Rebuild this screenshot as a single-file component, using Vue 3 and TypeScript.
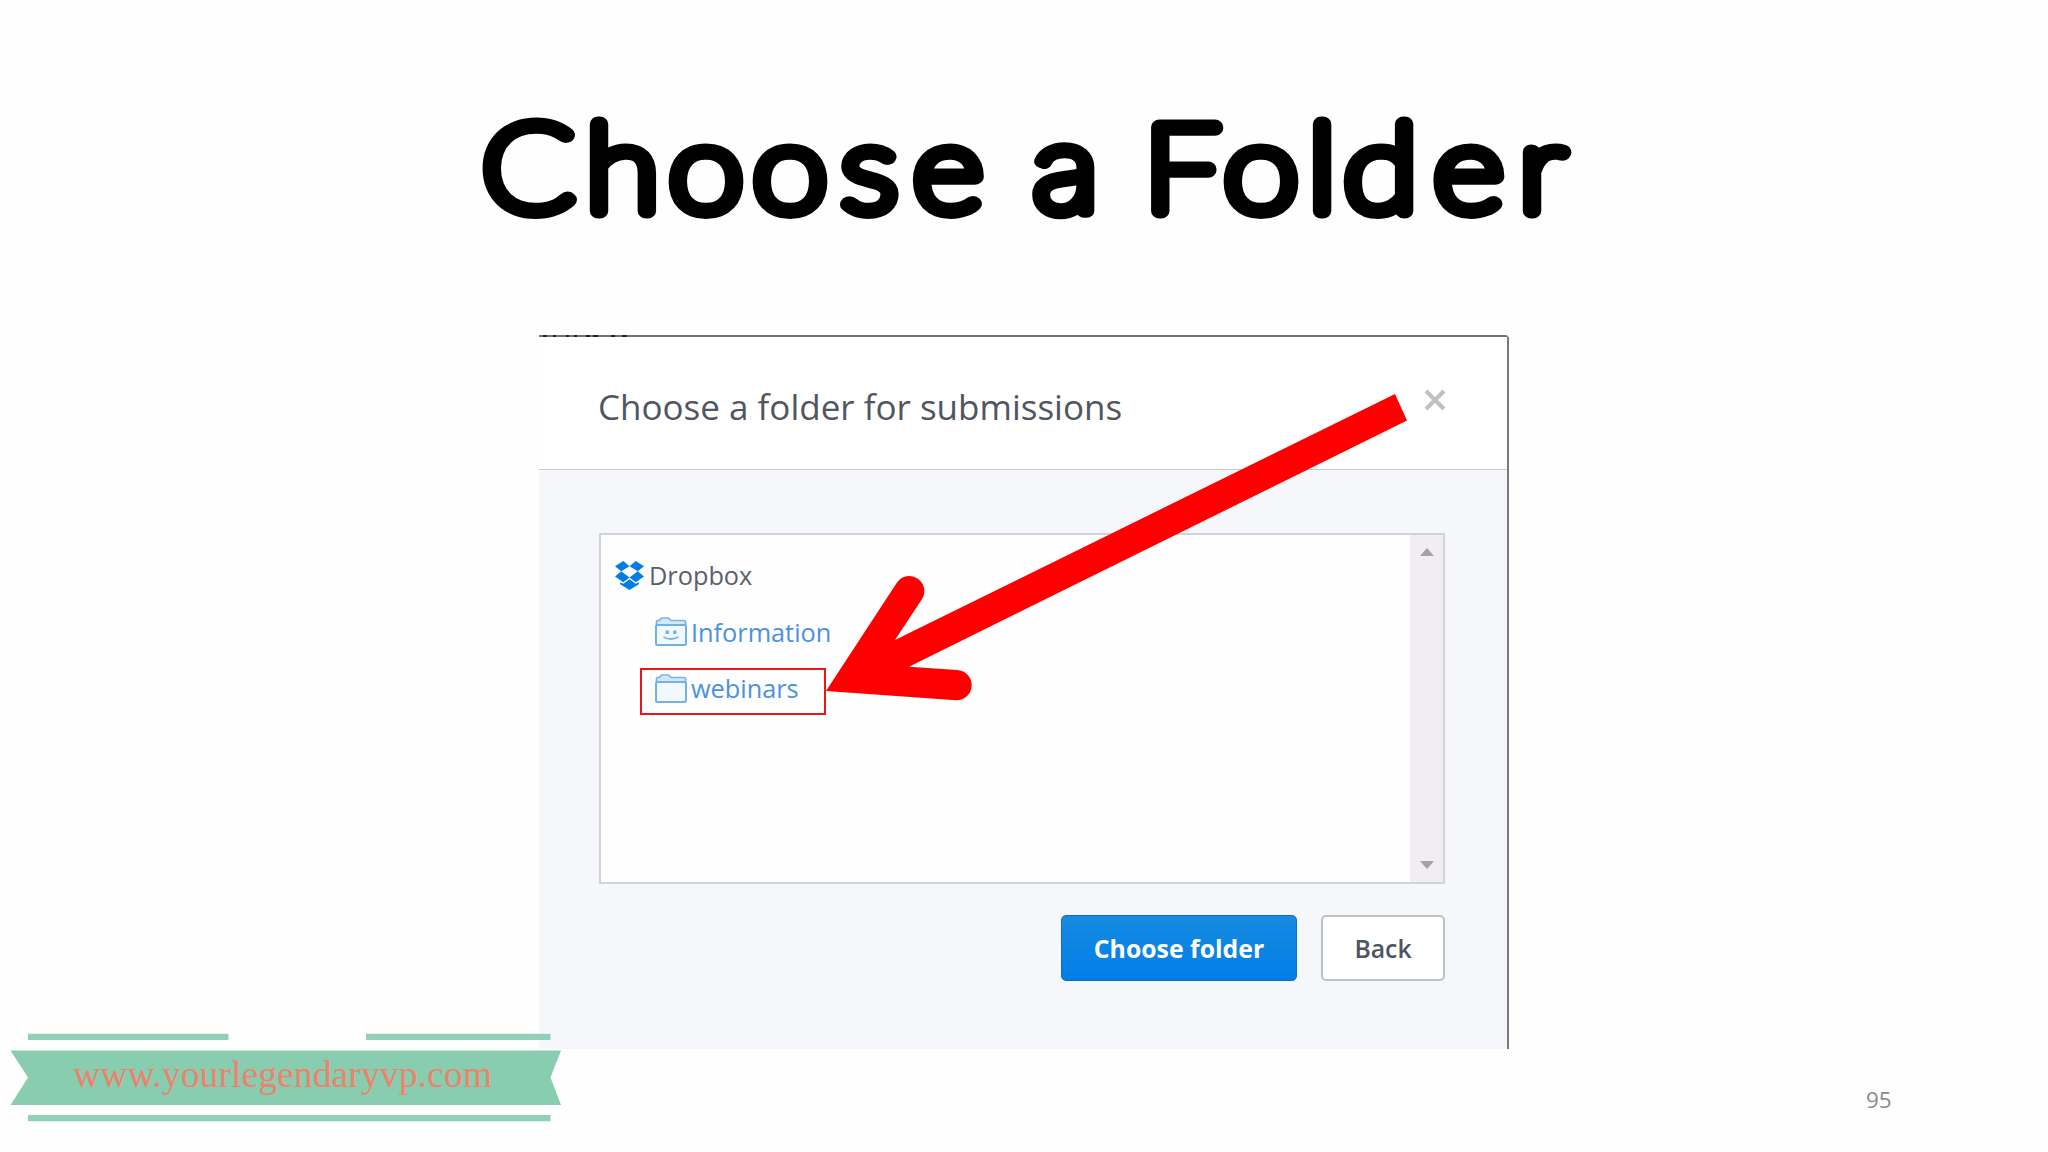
<template>
    <main class="slide">
        <svg class="headline" viewBox="0 0 2048 335" role="heading" aria-level="1">
            <text :x="headlineX" y="211.500" transform="scale(1.12 1)">Choose <tspan class="round-a">a</tspan> Folder</text>
        </svg>

        <section class="dialog">
            <svg class="clipped-text" viewBox="0 0 92 2">
                <path d="M4 1h4M14 1h3M27 1h3M35 1h3M47 1h4M54 1h5M72 1h4M83 1h5" />
            </svg>
            <header class="dialog-header">
                <h2>Choose a folder for submissions</h2>
                <button class="dialog-close" aria-label="Close">
                    <svg viewBox="0 0 22 22"><path d="M2 2l18 18M20 2L2 20" /></svg>
                </button>
            </header>
            <div class="dialog-body">
                <div class="tree">
                    <div class="tree-content">
                        <div class="tree-root">
                            <svg class="dropbox-icon" viewBox="0 0 28 28">
                                <path d="M8 0l6 5-8 5-6-5zM20 0l8 5-6 5-8-5zM0 15l6-5 8 6-6 4.500zM28 15l-6-5-8 6 6 4.500zM14 17.500l6 4.500 3-1.500v2L14 28l-9-5.500v-2L8 22z" />
                            </svg>
                            <span>Dropbox</span>
                        </div>
                        <div v-for="folder in folders" :key="folder.name" class="tree-row">
                            <svg class="folder-icon" viewBox="0 0 32 29">
                                <path class="folder-tab" d="M1.500 8V4.500q0-1 1-1h2L6.500 1h7l2.500 2.500h13.500q1 0 1 1V8z" />
                                <rect class="folder-front" x="1" y="8" width="30" height="20" rx="1.500" />
                                <path v-if="folder.shared" class="face" d="M10.500 13.500h3.500v3.500h-3.500zM18 13.500h3.500v3.500h-3.500z" />
                                <path v-if="folder.shared" class="smile" d="M8.500 20q7.500 4 15 0" />
                            </svg>
                            <span>{{ folder.name }}</span>
                        </div>
                    </div>
                    <div class="scrollbar">
                        <svg viewBox="0 0 14 8"><path d="M7 0l7 8H0z" /></svg>
                        <svg viewBox="0 0 14 8"><path d="M0 0h14L7 8z" /></svg>
                    </div>
                </div>
                <div class="actions">
                    <button class="btn btn-primary">Choose folder</button>
                    <button class="btn btn-back">Back</button>
                </div>
            </div>
        </section>

        <!-- annotations on top of the dialog -->
        <div class="highlight"></div>
        <svg class="arrow" viewBox="0 0 600 330">
            <path d="M16 311L87 202.500A14.700 14.700 0 0 1 111.700 219.500L85 260 585 14l12 26.500L99 286.700l48 3.300A14.700 14.700 0 0 1 146 320.300z" />
        </svg>

        <svg class="ribbon" viewBox="0 0 570 100">
            <path class="band" d="M28 3.700h200.500V10H28zM366 3.700h184.500V10H366zM28 85h522.500v6.300H28z" />
            <path class="band solid" d="M10.500 20.500H561L550.500 47.500 561 75H10.500L28 47.500z" />
            <text x="73" y="57" textLength="419" lengthAdjust="spacingAndGlyphs">www.yourlegendaryvp.com</text>
        </svg>

        <span class="page-number">95</span>
    </main>
</template>

<script setup lang="ts">
interface Folder {
    name: string;
    shared: boolean;
}

const folders: Folder[] = [
    { name: 'Information', shared: true },
    { name: 'webinars', shared: false },
];

const stretch = 1.12;

// centre of every letter, spaces included
const headlineX = [
    528, 622.7, 706, 790, 869.5, 948, 1000, 1066, 1120, 1182, 1261, 1322, 1380.5, 1468.5, 1542,
]
    .map((x) => (x / stretch).toFixed(1))
    .join(' ');
</script>

<style>
body {
    margin: 0;
    background: #fefefe;
}
</style>

<style scoped>
.slide {
    position: relative;
    width: 2048px;
    height: 1152px;
    overflow: hidden;
    background: #fefefe;
    font-family: 'Open Sans', 'Noto Sans', sans-serif;
}

.headline {
    display: block;
    width: 2048px;
    height: 335px;
}

.headline text {
    font-family: Lato, 'Liberation Sans', sans-serif;
    font-size: 121px;
    font-weight: 100;
    text-anchor: middle;
    fill: #000;
    stroke: #000;
    stroke-width: 15px;
    stroke-linejoin: round;
    stroke-linecap: round;
}

.headline .round-a {
    font-family: Inter, sans-serif;
    font-size: 112px;
    stroke-width: 13.5px;
}

.dialog {
    position: relative;
    box-sizing: border-box;
    width: 970px;
    height: 714px;
    margin-left: 539px;
    border-top: 2px solid #6f726f;
    border-right: 2px solid #777a7e;
    border-top-right-radius: 4px;
    background: #f5f7fb;
}

.clipped-text {
    position: absolute;
    top: -2px;
    left: 0;
    width: 92px;
    height: 2px;
    stroke: #222;
    stroke-width: 2;
}

.dialog-header {
    box-sizing: border-box;
    height: 133px;
    padding: 0 61px 0 59px;
    display: flex;
    justify-content: space-between;
    border-bottom: 1.5px solid #c6c9cf;
    background: #fff;
}

.dialog-header h2 {
    margin: 46px 0 0;
    font-size: 35px;
    line-height: 48px;
    font-weight: 400;
    color: #505661;
    white-space: nowrap;
}

.dialog-close {
    width: 22px;
    height: 22px;
    margin-top: 52px;
    padding: 0;
    border: none;
    background: none;
}

.dialog-close svg {
    display: block;
    stroke: #c0c0c0;
    stroke-width: 4;
}

.dialog-body {
    padding: 63px 62px 0 60px;
}

.tree {
    box-sizing: border-box;
    height: 351px;
    display: flex;
    border: 2px solid #d0d3d8;
    background: #fefefe;
}

.tree-content {
    flex: 1;
    padding: 12px 0 0 14px;
    font-size: 25.3px;
}

.tree-root,
.tree-row {
    display: flex;
    align-items: center;
    height: 56.500px;
}

.tree-root {
    color: #5a606b;
}

.tree-row {
    padding-left: 40px;
    color: #4a92e0;
}

.dropbox-icon {
    width: 29px;
    height: 29px;
    margin-right: 5px;
    fill: #007ee5;
}

.folder-icon {
    width: 32px;
    height: 29px;
    margin-right: 4px;
}

.folder-tab {
    fill: #d2e7f8;
    stroke: #7ab5e5;
    stroke-width: 1.7;
}

.folder-front {
    fill: #f1f9ff;
    stroke: #74b1e3;
    stroke-width: 2;
}

.face {
    fill: #7ab5e5;
}

.smile {
    fill: none;
    stroke: #7ab5e5;
    stroke-width: 1.8;
}

.scrollbar {
    width: 33px;
    box-sizing: border-box;
    padding: 13px 0;
    display: flex;
    flex-direction: column;
    align-items: center;
    justify-content: space-between;
    background: #f0eef1;
}

.scrollbar svg {
    width: 14px;
    height: 8px;
    fill: #a3a3a3;
}

.actions {
    display: flex;
    justify-content: flex-end;
    gap: 24px;
    margin-top: 31px;
}

.btn {
    box-sizing: border-box;
    height: 66px;
    padding: 0;
    border-radius: 5px;
    font-family: inherit;
    font-size: 24.8px;
    white-space: nowrap;
}

.btn-primary {
    width: 236px;
    border: 1.5px solid #0b6cc0;
    background: linear-gradient(#168be0, #007ee8);
    color: #fff;
    font-weight: 700;
}

.btn-back {
    width: 124px;
    border: 2px solid #bdc0c5;
    background: #fff;
    color: #4c5562;
    font-weight: 600;
}

.highlight {
    position: absolute;
    left: 640px;
    top: 668px;
    box-sizing: border-box;
    width: 186px;
    height: 47px;
    border: 2px solid #ee1414;
}

.arrow {
    position: absolute;
    left: 810px;
    top: 380px;
    width: 600px;
    height: 330px;
    fill: #f00;
}

.ribbon {
    position: absolute;
    left: 0;
    top: 1030px;
    width: 570px;
    height: 100px;
}

.band {
    fill: #8fd1b7;
}

.band.solid {
    fill: #89cdb0;
}

.ribbon text {
    font-family: 'Liberation Serif', serif;
    font-size: 37px;
    fill: #ee826c;
}

.page-number {
    position: absolute;
    left: 1866px;
    top: 1084px;
    font-size: 22.5px;
    line-height: 31px;
    color: #8b8b8b;
}
</style>
